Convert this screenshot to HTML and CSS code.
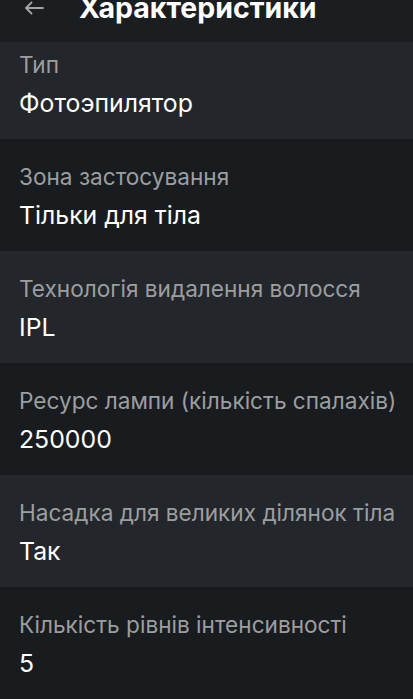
FILE: index.html
```html
<!DOCTYPE html>
<html lang="uk">
<head>
<meta charset="utf-8">
<link rel="stylesheet" href="styles.css">
</head>
<body>
<div class="page">
  <header class="header">
    <svg class="back" width="20" height="14" viewBox="0 0 20 14" fill="none" stroke="currentColor" stroke-width="1.8" stroke-linecap="round" stroke-linejoin="round"><path d="M19 7H2M7.5 1.5L2 7l5.5 5.5"/></svg>
    <h1 class="title">Характеристики</h1>
  </header>
  <div class="list">
    <div class="row odd first"><div class="label">Тип</div><div class="value">Фотоэпилятор</div></div>
    <div class="row even"><div class="label">Зона застосування</div><div class="value">Тільки для тіла</div></div>
    <div class="row odd"><div class="label">Технологія видалення волосся</div><div class="value">IPL</div></div>
    <div class="row even"><div class="label">Ресурс лампи (кількість спалахів)</div><div class="value">250000</div></div>
    <div class="row odd"><div class="label">Насадка для великих ділянок тіла</div><div class="value">Так</div></div>
    <div class="row even"><div class="label">Кількість рівнів інтенсивності</div><div class="value">5</div></div>
  </div>
</div>
</body>
</html>
```
FILE: styles.css
```css
html, body {
  margin: 0;
  padding: 0;
  background: #191c1f;
  overflow: hidden;
}
.page {
  width: 413px;
  height: 699px;
  display: flex;
  flex-direction: column;
  font-family: Inter, "Noto Sans", sans-serif;
}
.header {
  height: 42px;
  flex: 0 0 42px;
  background: #1b1e21;
  display: flex;
  align-items: flex-start;
  overflow: hidden;
}
.back {
  color: #a3a6a9;
  margin: 0 0 0 24px;
  margin-top: 1px;
}
.title {
  margin: -12px 0 0 35px;
  font-size: 28.5px;
  line-height: 40px;
  font-weight: 700;
  color: #ffffff;
  letter-spacing: 0;
}
.list {
  display: flex;
  flex-direction: column;
}
.row {
  height: 112px;
  box-sizing: border-box;
  padding: 24px 19px 0;
  display: flex;
  flex-direction: column;
  gap: 10px;
}
.row.first {
  height: 97px;
  padding-top: 9px;
}
.odd { background: #23272b; }
.even { background: #191c1f; }
.label {
  font-size: 22.6px;
  line-height: 28px;
  color: #9b9ea1;
  white-space: nowrap;
}
.value {
  font-size: 24.8px;
  line-height: 28px;
  color: #ffffff;
}
```
